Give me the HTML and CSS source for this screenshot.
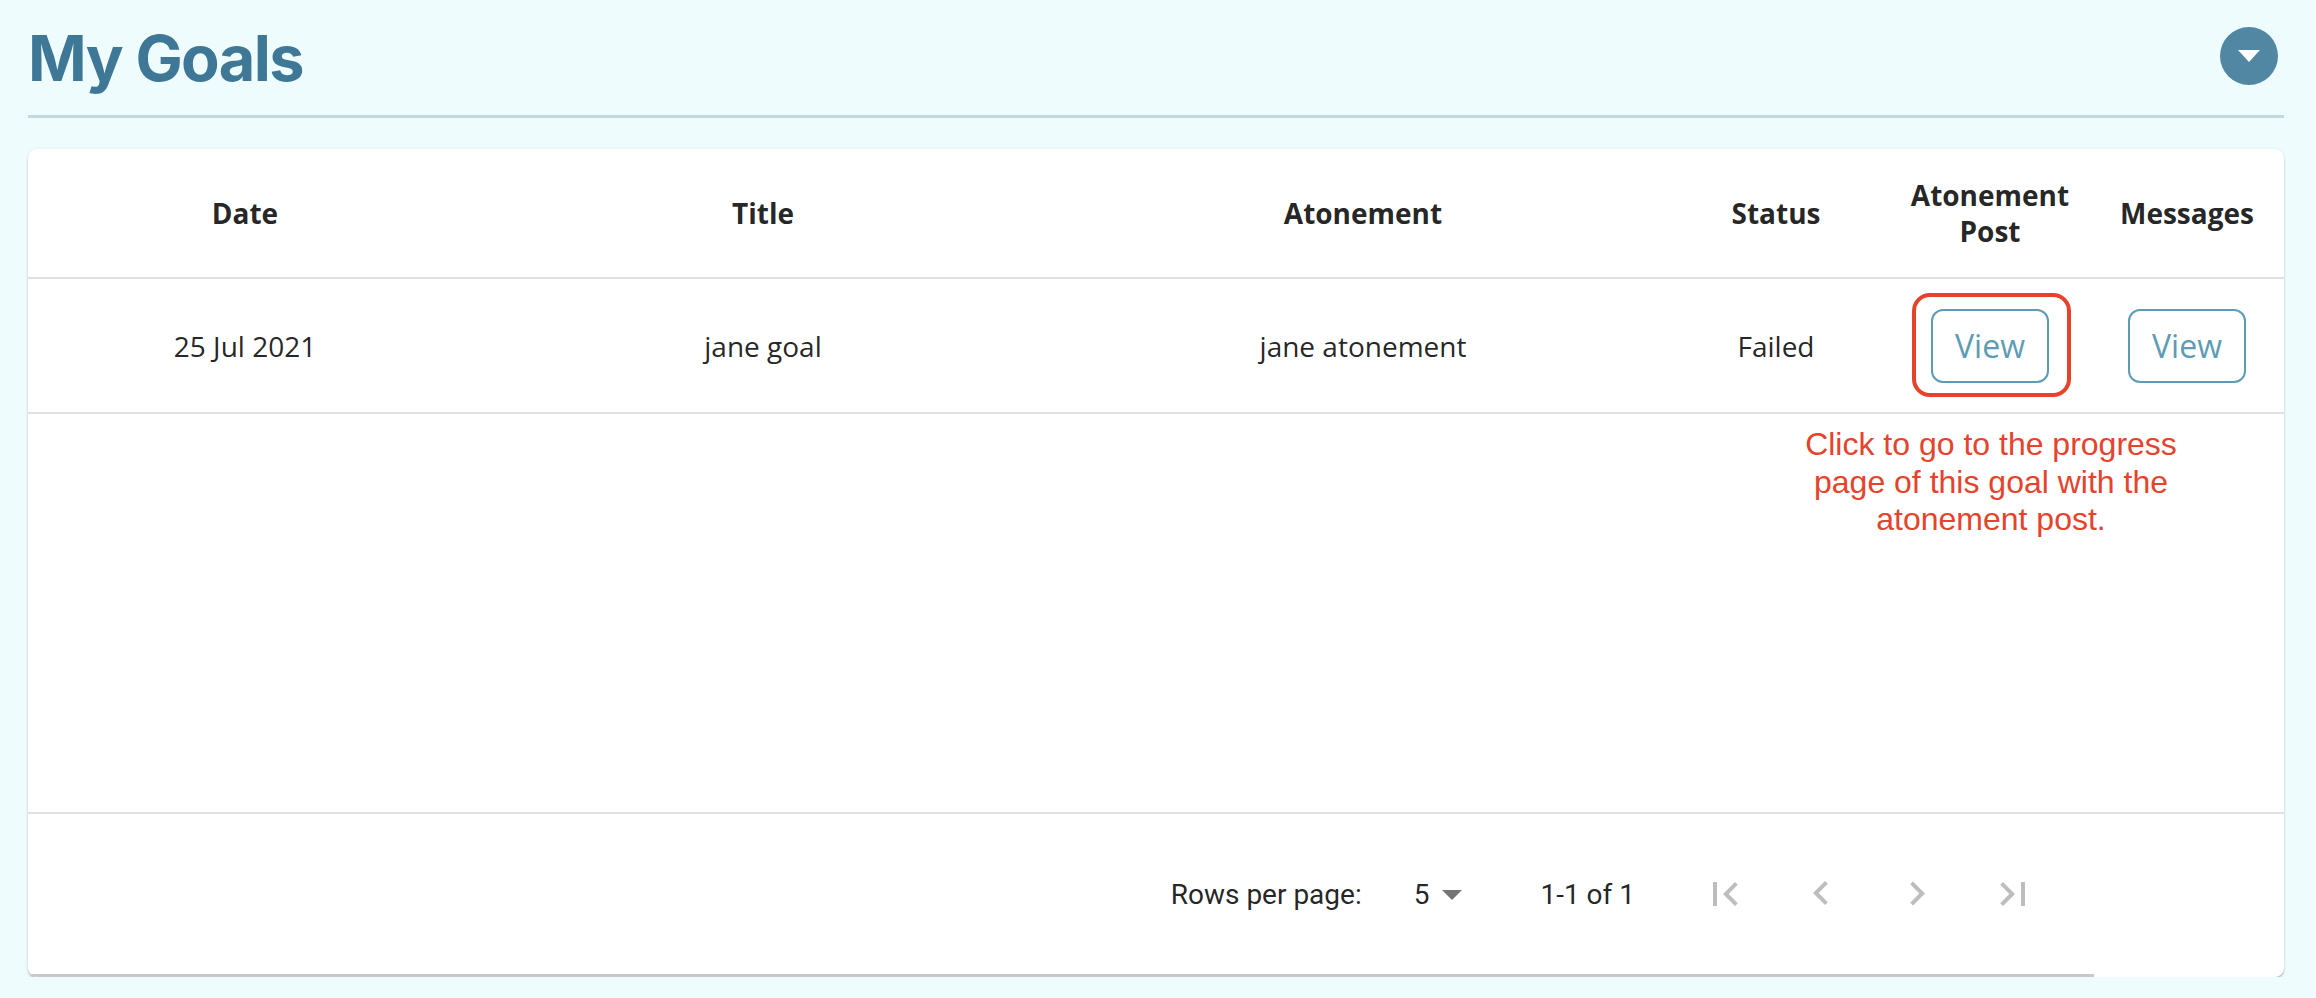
FILE: index.html
```html
<!DOCTYPE html>
<html lang="en">
<head>
<meta charset="utf-8">
<title>My Goals</title>
<link rel="stylesheet" href="styles.css">
</head>
<body>
<div class="page">
  <header class="page-header">
    <h1 class="page-title">My Goals</h1>
    <button class="menu-toggle" aria-label="Toggle">
      <svg viewBox="0 0 58 58" width="58" height="58"><polygon points="18,23 40,23 29,35" fill="#ffffff"/></svg>
    </button>
  </header>
  <div class="divider"></div>

  <section class="card">
    <table class="goals">
      <colgroup>
        <col class="col-date"><col class="col-title"><col class="col-atone"><col class="col-status"><col class="col-post"><col class="col-msg">
      </colgroup>
      <thead>
        <tr class="head-row">
          <th>Date</th>
          <th>Title</th>
          <th>Atonement</th>
          <th>Status</th>
          <th>Atonement Post</th>
          <th>Messages</th>
        </tr>
      </thead>
      <tbody>
        <tr class="data-row">
          <td>25 Jul 2021</td>
          <td>jane goal</td>
          <td>jane atonement</td>
          <td>Failed</td>
          <td><span class="highlight"><button class="view-btn">View</button></span></td>
          <td><button class="view-btn">View</button></td>
        </tr>
        <tr class="empty-row"><td colspan="6"></td></tr>
      </tbody>
    </table>

    <div class="pagination">
      <span class="rows-label">Rows per page:</span>
      <span class="rows-select">
        <span class="rows-value">5</span>
        <svg class="dd-icon" viewBox="0 0 24 24" width="48" height="48"><path d="M7 10l5 5 5-5z" fill="#757575"/></svg>
      </span>
      <span class="rows-range">1-1 of 1</span>
      <span class="actions">
        <span class="icon-btn"><svg viewBox="0 0 24 24" width="48" height="48"><path d="M18.41 16.59L13.82 12l4.59-4.59L17 6l-6 6 6 6zM6 6h2v12H6z"/></svg></span>
        <span class="icon-btn"><svg viewBox="0 0 24 24" width="48" height="48"><path d="M15.41 16.09l-4.58-4.59 4.58-4.59L14 5.5l-6 6 6 6z"/></svg></span>
        <span class="icon-btn"><svg viewBox="0 0 24 24" width="48" height="48"><path d="M8.59 16.34l4.58-4.59-4.58-4.59L10 5.75l6 6-6 6z"/></svg></span>
        <span class="icon-btn"><svg viewBox="0 0 24 24" width="48" height="48"><path d="M5.59 7.41L10.18 12l-4.59 4.59L7 18l6-6-6-6zM16 6h2v12h-2z"/></svg></span>
      </span>
    </div>
    <div class="hscroll"><div class="hscroll-thumb"></div></div>

    <p class="annotation">Click to go to the progress<br>page of this goal with the<br>atonement post.</p>
  </section>
</div>
</body>
</html>
```

FILE: styles.css
```css
html, body {
  margin: 0;
  padding: 0;
  background: #effcfe;
}

.page {
  padding: 20px 32px 0 28px;
}

.page-header {
  display: flex;
  align-items: center;
  justify-content: space-between;
  height: 76px;
}

.page-title {
  margin: 0;
  font-family: Inter, "Liberation Sans", sans-serif;
  font-weight: 700;
  font-size: 63px;
  line-height: 76px;
  color: #3f7896;
  letter-spacing: -1.6px;
}

.menu-toggle {
  width: 58px;
  height: 58px;
  padding: 0;
  border: none;
  border-radius: 50%;
  background: #5287a3;
  margin: 0 6px 4px 0;
  display: flex;
}

.divider {
  margin-top: 19px;
  height: 3px;
  background: #c1d9df;
}

.card {
  position: relative;
  margin-top: 31px;
  background: #ffffff;
  border-radius: 9px;
  overflow: hidden;
  box-shadow: 0 2px 2px rgba(0,0,0,0.22), 0 0 4px rgba(0,0,0,0.06);
}

.goals {
  width: 100%;
  table-layout: fixed;
  border-collapse: separate;
  border-spacing: 0;
  font-family: "Open Sans", "Liberation Sans", sans-serif;
  font-size: 28px;
  color: rgba(0,0,0,0.87);
}

.col-date { width: 434px; }
.col-title { width: 602px; }
.col-atone { width: 598px; }
.col-status { width: 228px; }
.col-post { width: 200px; }
.col-msg { width: 194px; }

.goals th,
.goals td {
  box-sizing: border-box;
  padding: 0 16px;
  text-align: center;
  vertical-align: middle;
  border-bottom: 2px solid #e0e0e0;
}

.goals th {
  height: 130px;
  font-weight: 700;
  line-height: 36px;
  color: rgba(0,0,0,0.87);
}

.data-row td {
  height: 135px;
  line-height: 40px;
  font-weight: 500;
}

.empty-row td {
  height: 400px;
}

.highlight {
  position: relative;
  display: inline-block;
  vertical-align: middle;
}

.highlight::after {
  content: "";
  position: absolute;
  top: -16px;
  bottom: -14px;
  left: -19px;
  right: -22px;
  border: 4px solid #e5432c;
  border-radius: 18px;
}

.view-btn {
  display: inline-block;
  vertical-align: middle;
  box-sizing: border-box;
  width: 118px;
  height: 74px;
  padding: 0;
  border: 2px solid #5e9cb4;
  border-radius: 12px;
  background: #ffffff;
  color: #5e9cb4;
  font-family: "Open Sans", "Liberation Sans", sans-serif;
  font-size: 32px;
  font-weight: 500;
}

.pagination {
  box-sizing: border-box;
  height: 160px;
  display: flex;
  align-items: center;
  justify-content: flex-end;
  padding-right: 223px;
  font-family: Roboto, "Liberation Sans", sans-serif;
  font-size: 28px;
  color: rgba(0,0,0,0.87);
}

.rows-select {
  display: flex;
  align-items: center;
  margin-left: 52px;
  margin-right: 64px;
}

.dd-icon {
  display: block;
  margin-left: -1px;
}

.actions {
  display: flex;
  margin-left: 42px;
}

.icon-btn {
  width: 96px;
  height: 96px;
  display: flex;
  align-items: center;
  justify-content: center;
  fill: rgba(0,0,0,0.26);
}

.icon-btn svg {
  display: block;
}

.hscroll {
  height: 3px;
}

.hscroll-thumb {
  width: 91.6%;
  height: 3px;
  background: #c8c8c8;
}

.annotation {
  position: absolute;
  margin: 0;
  top: 277px;
  left: 1763px;
  width: 400px;
  text-align: center;
  white-space: nowrap;
  font-family: "Liberation Sans", Arial, sans-serif;
  font-size: 32px;
  line-height: 37.5px;
  color: #e5432c;
}
```
